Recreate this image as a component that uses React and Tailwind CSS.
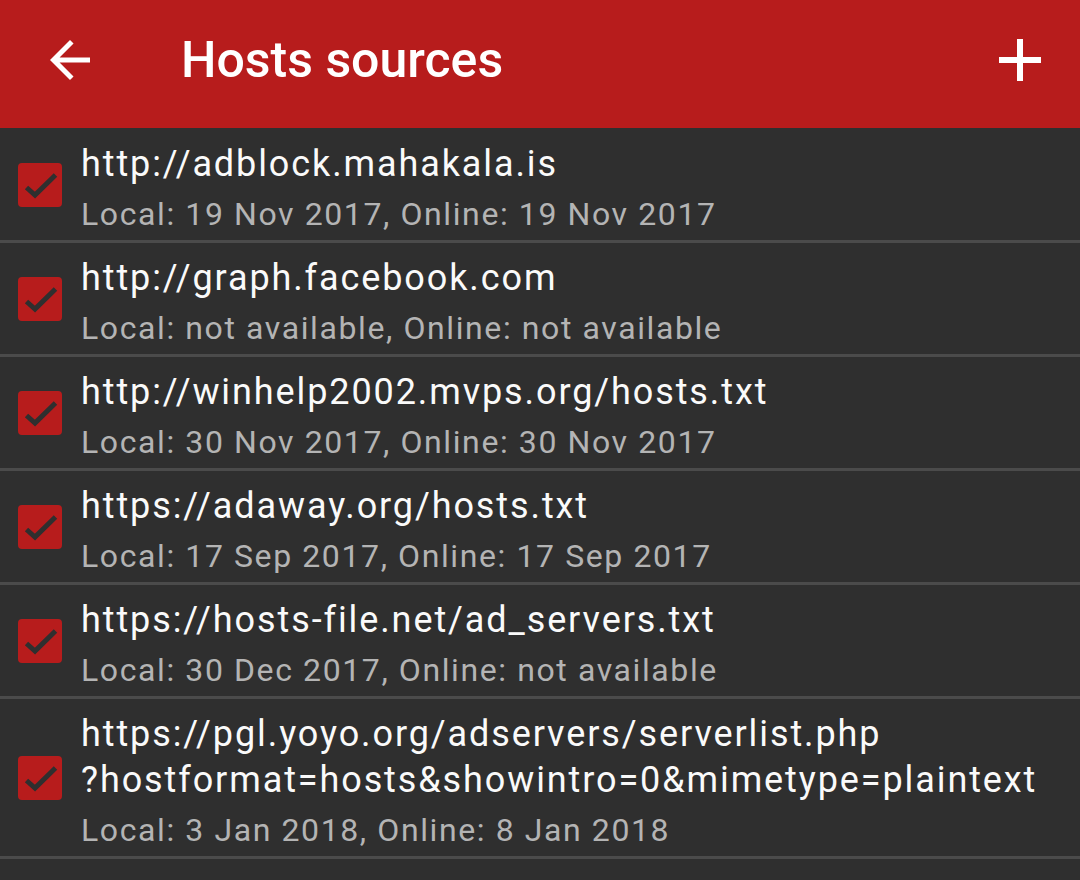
import React from "react";

const rows = [
  { t: ["http://adblock.mahakala.is"], s: "Local: 19 Nov 2017, Online: 19 Nov 2017" },
  { t: ["http://graph.facebook.com"], s: "Local: not available, Online: not available" },
  { t: ["http://winhelp2002.mvps.org/hosts.txt"], s: "Local: 30 Nov 2017, Online: 30 Nov 2017" },
  { t: ["https://adaway.org/hosts.txt"], s: "Local: 17 Sep 2017, Online: 17 Sep 2017" },
  { t: ["https://hosts-file.net/ad_servers.txt"], s: "Local: 30 Dec 2017, Online: not available" },
  {
    t: ["https://pgl.yoyo.org/adservers/serverlist.php", "?hostformat=hosts&showintro=0&mimetype=plaintext"],
    s: "Local: 3 Jan 2018, Online: 8 Jan 2018",
  },
];

function Check() {
  return (
    <div className="w-[44px] h-[44px] rounded-[4px] bg-[#b71c1c] shrink-0 flex items-center justify-center">
      <svg width="44" height="44" viewBox="0 0 44 44">
        <polyline points="8.5,24.5 17,32 37.5,12" fill="none" stroke="#2f2f2f" strokeWidth="5" />
      </svg>
    </div>
  );
}

export default function App() {
  return (
    <div
      className="w-[1080px] h-[880px] bg-[#2f2f2f] overflow-hidden"
      style={{ fontFamily: "Roboto, 'Noto Sans', sans-serif" }}
    >
      <div className="h-[128px] bg-[#b71c1c] flex items-center pl-[50px] pr-[39px] pb-[8px]">
        <svg width="40" height="40" viewBox="4 4 16 16" className="shrink-0">
          <path d="M20 11H7.83l5.59-5.59L12 4l-8 8 8 8 1.41-1.41L7.83 13H20v-2z" fill="#ffffff" />
        </svg>
        <div className="ml-[91px] text-[50px] font-medium text-white leading-[58px]">Hosts sources</div>
        <svg width="42" height="42" viewBox="5 5 14 14" className="ml-auto shrink-0">
          <path d="M19 13h-6v6h-2v-6H5v-2h6V5h2v6h6v2z" fill="#ffffff" />
        </svg>
      </div>
      <div className="pt-[1px]">
        {rows.map((r, i) => (
          <div key={i} className="border-b-[3px] border-[#4b4b4b]">
            <div className="flex items-center pl-[18px]">
              <Check />
              <div className="ml-[19px] pt-[14px] pb-[7px]">
                <div className="text-[36px] leading-[42px] tracking-[1.9px] text-[#fafafa] flex flex-col gap-[4px]">
                  {r.t.map((l, j) => (
                    <div key={j}>{l}</div>
                  ))}
                </div>
                <div className="mt-[10px] text-[32px] leading-[38px] tracking-[1.6px] text-[#b4b4b4]">{r.s}</div>
              </div>
            </div>
          </div>
        ))}
      </div>
    </div>
  );
}
